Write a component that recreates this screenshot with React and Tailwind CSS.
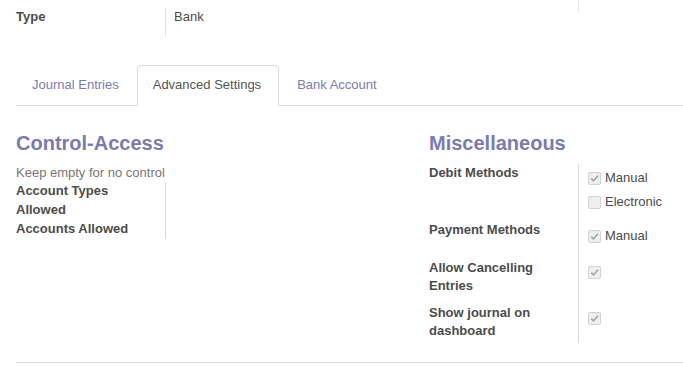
const font = { fontFamily: '"Liberation Sans", Arial, sans-serif' }

function Check({ checked }) {
  return (
    <span className="w-[13px] h-[13px] rounded-[2px] border border-[#d2d2d2] bg-[#efefef] flex items-center justify-center shrink-0">
      {checked && (
        <svg width="9" height="9" viewBox="0 0 9 9" fill="none">
          <path d="M1.2 4.6 L3.5 6.9 L7.9 1.8" stroke="#a3a3a3" strokeWidth="1.6" />
        </svg>
      )}
    </span>
  )
}

function Option({ checked, label }) {
  return (
    <div className="flex items-center gap-[4px] h-[18px] mb-[6px]">
      <Check checked={checked} />
      {label && <span className="text-[#4c4c4c]">{label}</span>}
    </div>
  )
}

function Row({ label, height, children }) {
  return (
    <div className="flex" style={{ height }}>
      <div className="w-[149px] pr-2 font-bold text-[#4c4c4c]">{label}</div>
      <div className="border-l border-[#dcdcdc] pl-[9px] pt-[6px]">{children}</div>
    </div>
  )
}

export default function App() {
  return (
    <div className="w-full bg-white text-[13px] leading-[18.57px] overflow-hidden" style={font}>
      <div className="pl-4">
        <div className="flex">
          <div className="w-[413px] pt-2 flex">
            <div className="w-[149px] font-bold text-[#4c4c4c]">Type</div>
            <div className="border-l border-[#e2e2e2] h-[28px] pl-2 text-[#4c4c4c]">Bank</div>
          </div>
          <div className="flex">
            <div className="w-[149px]" />
            <div className="border-l border-[#e8e8e8] h-[13px]" />
          </div>
        </div>

        <ul className="mt-[29px] flex border-b border-[#dddddd]">
          <li className="mr-[2px] -mb-px px-[15px] py-[10px] border border-transparent text-[#7c7bad]">
            Journal Entries
          </li>
          <li className="mr-[2px] -mb-px pl-[15px] pr-[17px] py-[10px] border border-[#dddddd] border-b-white rounded-t bg-white text-[#555555]">
            Advanced Settings
          </li>
          <li className="mr-[2px] -mb-px px-[15px] py-[10px] border border-transparent text-[#7c7bad]">
            Bank Account
          </li>
        </ul>

        <div className="flex mt-[26px]">
          <div className="w-[413px]">
            <h2 className="text-[20px] leading-[22px] font-bold text-[#7c7bad]">Control-Access</h2>
            <div className="mt-[10px] text-[#777777]">Keep empty for no control</div>
            <div className="flex h-[37.5px]">
              <div className="w-[149px] pr-2 font-bold text-[#4c4c4c]">Account Types Allowed</div>
              <div className="border-l border-[#dcdcdc]" />
            </div>
            <div className="flex h-[19px]">
              <div className="w-[149px] pr-2 font-bold text-[#4c4c4c]">Accounts Allowed</div>
              <div className="border-l border-[#dcdcdc]" />
            </div>
          </div>

          <div className="flex-1">
            <h2 className="text-[20px] leading-[22px] font-bold text-[#7c7bad]">Miscellaneous</h2>
            <div className="mt-[10px]">
              <Row label="Debit Methods" height={57}>
                <Option checked label="Manual" />
                <Option label="Electronic" />
              </Row>
              <Row label="Payment Methods" height={38}>
                <div className="pt-px">
                  <Option checked label="Manual" />
                </div>
              </Row>
              <Row label="Allow Cancelling Entries" height={45}>
                <div className="-mt-px">
                  <Option checked />
                </div>
              </Row>
              <Row label="Show journal on dashboard" height={39}>
                <Option checked />
              </Row>
            </div>
          </div>
        </div>

        <div className="mt-[19px] border-t border-[#dddddd] h-[4px]" />
      </div>
    </div>
  )
}
